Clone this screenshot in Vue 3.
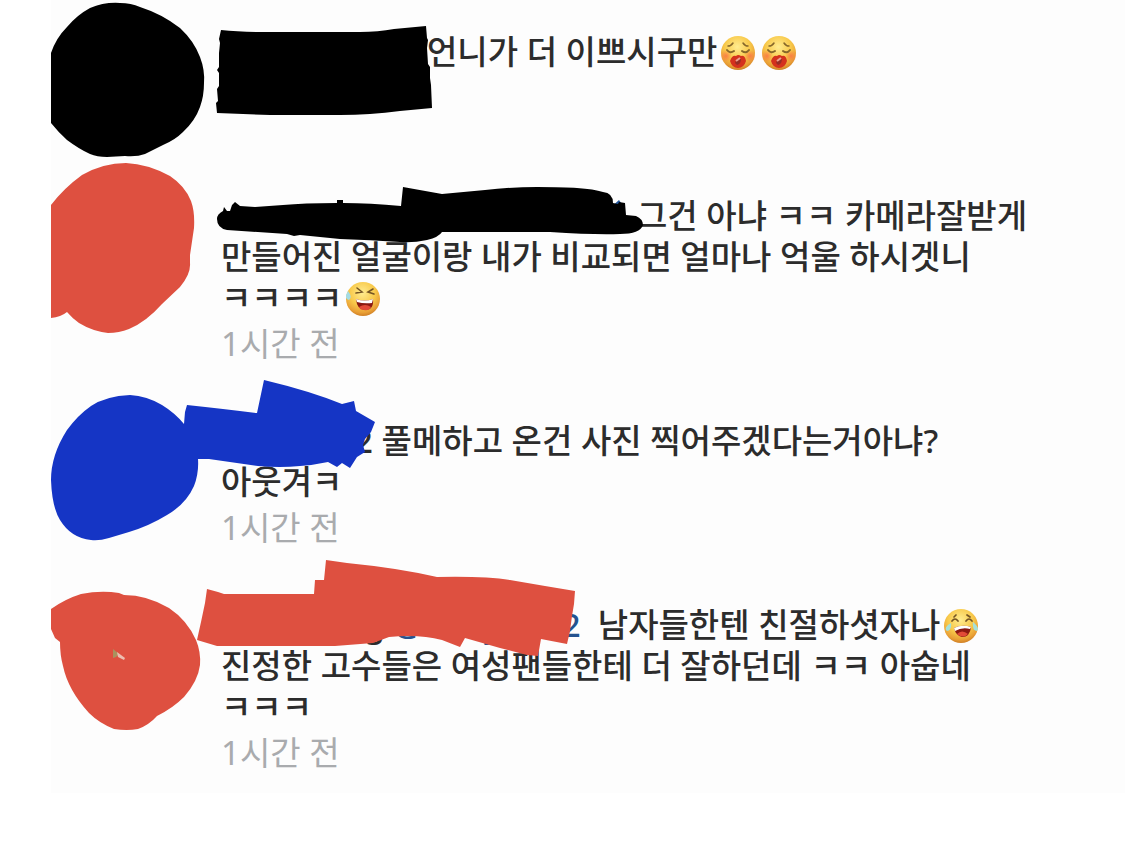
<script setup>
const comments = [
  {
    name: 'first',
    text: '언니가 더 이쁘시구만',
    emoji: ['yawn', 'yawn'],
    view: '51 3 600 164',
    marks: [
      { fill: '#000', d: 'M51 53Q56 38 67 27Q77 15 90 8Q104 2 120 3Q131 3 140 7Q162 14 180 28Q194 41 200 57Q205 70 204 83Q204 96 200 107Q195 121 183 132Q175 140 163 145L145 154Q137 157 125 156L107 157Q97 157 90 154Q79 149 67 140Q59 133 51 123Z' },
      { fill: '#000', d: 'M221 30Q240 32 265 32H360Q378 32 394 29L426 26L427 38L428 40L427 48L428 64L430 67V78L431 85L432 108L400 111Q370 115 340 115H270L217 113L216 103L218 101L217 89L219 86V73L217 70L219 67V53L220 43L219 39Z' }
    ]
  },
  {
    name: 'second',
    text: '그건 아냐 ㅋㅋ 카메라잘받게 만들어진 얼굴이랑 내가 비교되면 얼마나 억울 하시겟니 ㅋㅋㅋㅋ',
    emoji: ['sweat'],
    time: '1시간 전',
    view: '51 167 600 225',
    marks: [
      { fill: '#de5040', d: 'M51 205Q64 188 82 175Q103 163 126 163Q148 164 170 176Q185 186 191 201Q195 212 194 228L190 255V263Q191 274 180 287L162 304Q146 322 129 329Q119 333 108 333Q92 331 79 323Q72 318 67 312Q61 317 51 318Z' },
      { fill: '#21549a', d: 'M610 208L619 200L624 207Z' },
      { fill: '#000', d: 'M217 219Q217 214 223 211L224 207L227 211H230L232 205L235 202L240 206L255 207L283 205Q303 203 337 203V200H343V203Q370 203 401 206L403 187L442 194L485 190Q510 187 537 187Q565 187 577 188Q594 189 603 192Q613 193 613 203L618 204L619 202L625 203L626 215L636 216Q643 219 643 225Q640 234 620 234Q595 235 550 232H442Q439 237 427 240Q413 243 400 242Q370 240 340 239L300 235L294 236L287 234L227 230Q217 228 217 219Z' }
    ]
  },
  {
    name: 'third',
    id: '2',
    text: '풀메하고 온건 사진 찍어주겠다는거아냐? 아웃겨ㅋ',
    time: '1시간 전',
    view: '51 392 600 184',
    marks: [
      { fill: '#1535c5', d: 'M51 480Q51 455 67 430Q78 415 91 406Q106 396 130 395Q147 396 162 405Q175 413 184 424L185 412L187 405Q225 409 257 413L264 380Q310 391 342 404L354 401L356 411L375 422L371 432L365 439L363 445L365 452L357 457L350 468L342 463L337 467L328 462Q314 465 300 466Q280 468 258 466L209 459H198Q199 473 194 486Q186 504 167 515Q149 526 129 532L109 538Q99 541 91 540Q71 538 60 520Q52 507 51 480Z' }
    ]
  },
  {
    name: 'fourth',
    id: 'g',
    mention: ['@', 'y', '2'],
    text: '남자들한텐 친절하셧자나',
    emoji: ['joy'],
    rest: '진정한 고수들은 여성팬들한테 더 잘하던데 ㅋㅋ 아숩네 ㅋㅋㅋ',
    time: '1시간 전',
    view: '51 576 600 225',
    marks: [
      { fill: '#de5040', d: 'M51 609Q65 599 81 594Q101 590 119 593L124 595Q147 595 169 608Q187 620 196 640Q201 652 200 665Q198 681 184 697Q173 708 157 716Q149 725 138 729Q127 731 114 729Q99 723 89 713Q68 690 63 666Q60 655 60 642L55 638L51 629Z' },
      { fill: '#de5040', d: 'M197 640L201 622L205 603L207 589L218 592L224 594H314L315 580H324L326 560L347 563Q398 568 437 577Q485 576 510 580L545 586L575 591L574 604L572 616L570 631L567 644L541 639L538 656L527 655L500 648L465 638L460 647L442 640Q419 634 389 637L373 643L335 646H217Z' },
      { fill: '#a9925e', d: 'M113 649L119 654L116 657L113 658Z' },
      { fill: '#edbeb1', d: 'M117 652L125 658L124 660L118 657Z' }
    ]
  }
]
</script>

<template>
  <main class="feed">
    <svg class="defs" aria-hidden="true">
      <defs>
        <radialGradient id="face" cx="48%" cy="32%" r="68%">
          <stop offset="0" stop-color="#ffec90" />
          <stop offset="0.55" stop-color="#f8c94a" />
          <stop offset="0.85" stop-color="#e9a036" />
          <stop offset="1" stop-color="#d08025" />
        </radialGradient>
        <radialGradient id="cheek">
          <stop offset="0" stop-color="#fb7445" stop-opacity="0.85" />
          <stop offset="1" stop-color="#fb7445" stop-opacity="0" />
        </radialGradient>
        <symbol id="yawn" viewBox="0 0 34 34">
          <circle cx="17" cy="17" r="17" fill="url(#face)" />
          <circle cx="5" cy="20" r="6" fill="url(#cheek)" />
          <circle cx="29" cy="20" r="6" fill="url(#cheek)" />
          <g fill="none" stroke="#86672a" stroke-width="1.5" stroke-linecap="round">
            <path d="M7 10Q10 10 12 7M22 7Q24 10 27 10" />
            <path d="M6 14Q9 18 13 15M21 15Q25 18 28 14" stroke-width="2" />
          </g>
          <path d="M9 25Q11 19 15 20Q17 18 20 20Q24 19 25 25Q23 32 17 32Q11 32 9 25Z" fill="#d4311d" />
          <path d="M14 27Q15 23 20 23Q20 28 16 29Z" fill="#972d25" />
          <path d="M15 25L19 22" stroke="#eba092" stroke-width="2" />
        </symbol>
        <symbol id="sweat" viewBox="0 0 34 34">
          <circle cx="17" cy="17" r="17" fill="url(#face)" />
          <g fill="none" stroke="#755524" stroke-width="1.6" stroke-linecap="round">
            <path d="M11 6L16 10L10 11M27 7L22 10L28 12" />
          </g>
          <path d="M10 17Q19 20 27 17Q28 28 19 28Q11 28 10 17Z" fill="#8b1911" />
          <path d="M10 17Q19 20 27 17L26 21Q18 22 11 20Z" fill="#fff" />
          <path d="M13 25Q19 21 25 25Q23 29 18 28Q14 28 13 25Z" fill="#e24a37" />
          <path d="M2 9Q7 15 3 18Q-1 17 0 13Z" fill="#a5dce3" />
        </symbol>
        <symbol id="joy" viewBox="0 0 34 34">
          <circle cx="17" cy="17" r="17" fill="url(#face)" />
          <g fill="none" stroke="#755524" stroke-width="1.7" stroke-linecap="round">
            <path d="M12 6L10 8M23 6L26 8M8 12Q11 8 14 12M22 12Q25 8 28 12" />
          </g>
          <path d="M10 19Q18 15 27 18Q26 28 18 28Q12 27 10 19Z" fill="#8b1911" />
          <path d="M10 19Q18 15 27 18L26 20Q18 18 11 22Z" fill="#fff" />
          <path d="M13 25Q18 20 24 25Q19 30 13 25Z" fill="#e24a37" />
          <path d="M7 14Q8 21 3 22Q-1 19 7 14ZM29 13Q36 19 33 22Q28 22 29 13Z" fill="#a5e0d9" />
        </symbol>
      </defs>
    </svg>

    <article v-for="c in comments" :key="c.name" class="comment">
      <div class="body">
        <p class="text">
          <span class="name" :class="c.name">{{ c.id }}</span><template v-if="c.mention">&nbsp;<a class="mention" href="#"><span v-for="m in c.mention" :key="m">{{ m }}</span></a>&nbsp;</template><template v-if="c.id">&nbsp;</template>{{ c.text }}<svg v-for="(e, i) in c.emoji" :key="i" class="emoji" aria-hidden="true"><use :href="'#' + e" /></svg>
          {{ c.rest }}
        </p>
        <time v-if="c.time" class="time">{{ c.time }}</time>
      </div>
      <svg class="marks" :viewBox="c.view" aria-hidden="true">
        <path v-for="(m, i) in c.marks" :key="i" :d="m.d" :fill="m.fill" />
      </svg>
    </article>
  </main>
</template>

<style>
body {
  margin: 0;
  background: #fff;
}
</style>

<style scoped>
.feed {
  margin-left: 51px;
  padding-top: 3px;
  background: #fdfdfd;
  color: #2c2c2c;
  font-family: "Noto Sans", "Noto Sans CJK KR", sans-serif;
  font-size: 33px;
  font-weight: 500;
  line-height: 41px;
}
.defs {
  position: absolute;
  width: 0;
  height: 0;
}
.comment {
  position: relative;
  box-sizing: border-box;
  min-height: 164px;
  padding: 28px 75px 28px 170px;
}
.comment:last-child {
  padding-bottom: 20px;
}
.text {
  margin: 0;
  word-break: keep-all;
}
.name {
  display: inline-block;
  text-align: right;
}
.first {
  width: 206px;
}
.second {
  width: 416px;
}
.third {
  width: 152px;
}
.fourth {
  width: 164px;
}
.mention {
  display: inline-flex;
  justify-content: space-between;
  width: 187px;
  color: #24538f;
  text-decoration: none;
}
.emoji {
  width: 34px;
  height: 34px;
  margin: 0 3px 0 4px;
  vertical-align: -6px;
}
.time {
  display: block;
  margin-top: 5px;
  color: #a9abae;
  font-weight: 400;
}
.marks {
  position: absolute;
  top: 0;
  left: 0;
  width: 600px;
  height: auto;
  overflow: visible;
  pointer-events: none;
}
</style>
